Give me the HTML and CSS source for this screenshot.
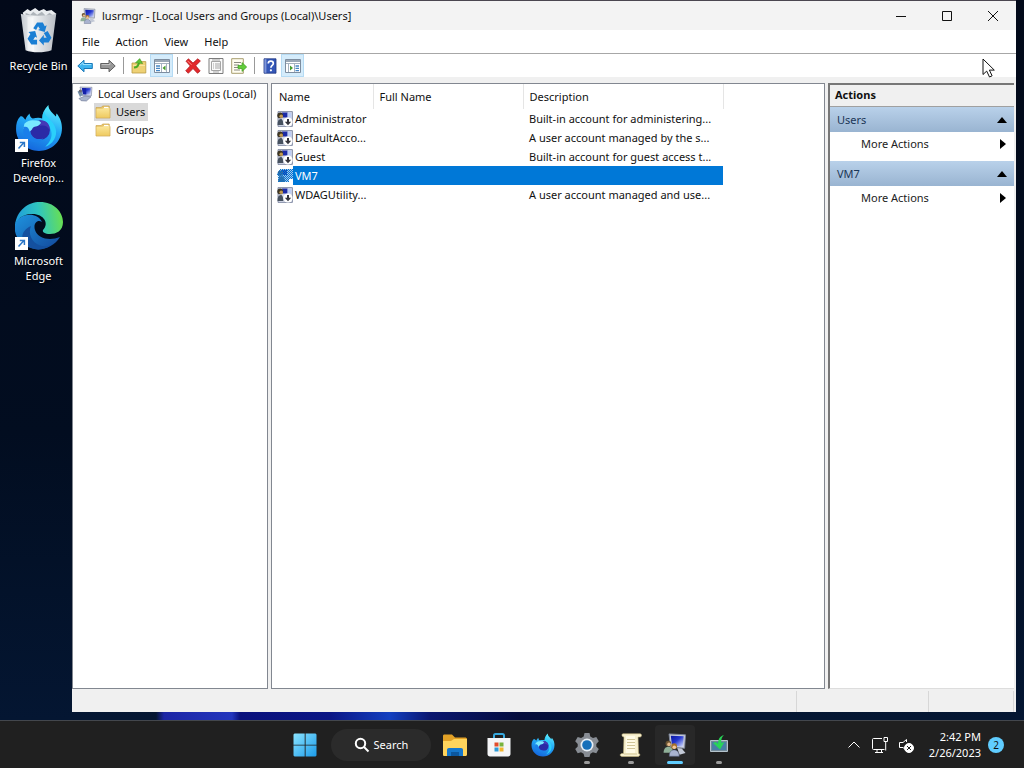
FILE: index.html
```
<!DOCTYPE html>
<html lang="en">
<head>
<meta charset="utf-8">
<meta name="viewport" content="width=device-width, initial-scale=1">
<title>lusrmgr - [Local Users and Groups (Local)\Users]</title>
<link rel="stylesheet" href="styles.css">
</head>
<body>
<svg class="sprite" aria-hidden="true">
  <defs>
    <linearGradient id="g-screen" x1="0" y1="0" x2="1" y2="1"><stop offset="0" stop-color="#0a16a0"/><stop offset=".45" stop-color="#2437cf"/><stop offset="1" stop-color="#dfe8ff"/></linearGradient>
    <linearGradient id="g-folder" x1="0" y1="0" x2="0" y2="1"><stop offset="0" stop-color="#fbe79c"/><stop offset="1" stop-color="#efcb62"/></linearGradient>
    <linearGradient id="g-fox" x1=".7" y1="0" x2=".3" y2="1"><stop offset="0" stop-color="#5df0ff"/><stop offset=".45" stop-color="#22a7f5"/><stop offset="1" stop-color="#1464dc"/></linearGradient>
    <linearGradient id="g-edge-top" x1="0" y1=".5" x2="1" y2=".4"><stop offset="0" stop-color="#1f9bdc"/><stop offset=".5" stop-color="#2fc5c0"/><stop offset="1" stop-color="#6be04d"/></linearGradient>
    <linearGradient id="g-edge-low" x1="0" y1="0" x2="1" y2="1"><stop offset="0" stop-color="#1e93df"/><stop offset="1" stop-color="#12479a"/></linearGradient>
    <linearGradient id="g-win" x1="0" y1="0" x2="1" y2="1"><stop offset="0" stop-color="#8be4ff"/><stop offset="1" stop-color="#1b9bea"/></linearGradient>
    <linearGradient id="g-bin" x1="0" y1="0" x2="1" y2="0"><stop offset="0" stop-color="#c5cad0"/><stop offset=".35" stop-color="#f1f3f5"/><stop offset="1" stop-color="#b9bec5"/></linearGradient>
    <pattern id="p-dither" width="2" height="2" patternUnits="userSpaceOnUse"><path fill="#0078d7" d="M0 0h1v1H0zM1 1h1v1H1z"/></pattern>
  </defs>
  <symbol id="i-mmc" viewBox="0 0 16 16">
    <path fill="#c9cdda" stroke="#7c8498" stroke-width=".6" d="M4 .6 15 1.2l-.6 9L5 9.4z"/>
    <path fill="url(#g-screen)" d="m5.2 1.8 8.6.4-.5 6.9-7.3-.6z"/>
    <path fill="#c3c9d6" d="m9.500 10 3 .300 2.500 3-4 1.200z"/>
    <circle cx="3.600" cy="7" r="1.900" fill="#6b5433"/><circle cx="4" cy="7.600" r="1.200" fill="#e5b98c"/>
    <path fill="#8faf98" d="M.400 13.200c0-2.600 1.300-4 3.300-4s3 1.500 3 4z"/>
    <circle cx="7.400" cy="8.800" r="1.900" fill="#a4702a"/><circle cx="7.500" cy="9.500" r="1.200" fill="#f1c79b"/>
    <path fill="#a9b3cf" stroke="#5c6484" stroke-width=".4" d="M4.200 15.500c0-2.800 1.200-4.200 3.200-4.200s3.400 1.400 3.400 4.200z"/>
  </symbol>
  <symbol id="i-root" viewBox="0 0 16 16">
    <path fill="#ccd0e0" stroke="#7c86a6" stroke-width=".6" d="m3 1 12 .3-.7 8.700-9.300-.6z"/>
    <path fill="url(#g-screen)" d="m5 2 8.800.3-.5 6.500-7.200-.5z"/>
    <path fill="#1420a8" d="m5 2 4 .2.3 6.300-3.200-.2z"/>
    <path fill="#7490aa" d="M.5 5.500 4 4.300l2 4.400-3 2.400z"/>
    <circle cx="3.400" cy="5" r="1.600" fill="#6c6a72"/>
    <path fill="#a9b4cc" stroke="#66718f" stroke-width=".6" d="m2 12.500 6-2.500 6 .800-4.600 4.200-5.200-.3z"/>
  </symbol>
  <symbol id="i-user" viewBox="0 0 16 16">
    <path fill="#d5d9e8" stroke="#6f7894" stroke-width=".8" d="M1 .6h14.400v14.800H1z"/>
    <path fill="#1c2aa5" d="M5 1.600h5.600v5H6z"/><path fill="#bccdf6" d="M10.600 1.600h3.800v5h-3.800z"/>
    <circle cx="3.200" cy="4.400" r="2.900" fill="#3d3524"/><circle cx="4.200" cy="5.200" r="1.800" fill="#c39b50"/>
    <path fill="#46515f" d="M.5 14c0-4 1.100-6 3.200-6 1.600 0 2.600 1.800 2.600 6z"/>
    <circle cx="11" cy="11" r="4.600" fill="#fff"/>
    <path fill="#34343c" d="M10 8h2v2.800h2.200L11 14.200l-3.200-3.400H10z"/>
  </symbol>
  <symbol id="i-user-sel" viewBox="0 0 16 16">
    <path fill="#a9c4e6" d="M5 1h11v13H2V9L0 6l3-4z"/><path fill="#1c3fb0" d="M5 2h5v5H6z"/>
    <circle cx="3.400" cy="5.200" r="2.600" fill="#39608c"/><path fill="#416a93" d="M1 14c0-4 1.300-6 3.400-6S8 10 8 14z"/>
    <path fill="url(#p-dither)" d="M3 1h13v13H1V9L0 6z"/><path fill="#fff" d="M12 11h4v5h-4z"/>
  </symbol>
  <symbol id="i-folder" viewBox="0 0 16 16">
    <path fill="#e8c469" stroke="#c9a24a" stroke-width=".7" d="M1 3.600h5.200L7.600 2h6.600v2.400H15V14H1z"/>
    <path fill="#fff" d="M9 2.900h4.500v1.400H9z"/><path fill="url(#g-folder)" d="M1.500 4.800h6L9 3.900h5.500v9.600h-13z"/>
  </symbol>
  <symbol id="i-back" viewBox="0 0 16 16"><path fill="#3fb3ee" stroke="#1a78b8" d="M.8 8 7 2.200v3.300h8.300v5H7v3.300z" stroke-linejoin="round"/><path stroke="#9ee2ff" d="M3 7.200 6 4.600v1.900h8.300" fill="none"/></symbol>
  <symbol id="i-forward" viewBox="0 0 16 16"><path fill="#979797" stroke="#606060" d="M15.200 8 9 2.200v3.300H.7v5H9v3.300z" stroke-linejoin="round"/><path stroke="#c3c3c3" d="M1.700 6.500H10V4.800" fill="none"/></symbol>
  <symbol id="i-up" viewBox="0 0 16 16"><path fill="#eed175" stroke="#b89a44" stroke-width=".8" d="M1 5h5l2-1.400h6.800V15H1z"/><path fill="#f8e5a0" d="M2 7h12v1H2z"/><path fill="none" stroke="#4bab25" stroke-width="2" d="M3 9.500c3 0 4.500-2 5-5"/><path fill="#5fc436" stroke="#388b1b" stroke-width=".5" d="m4.500 4.800 4.200-4.200 3 5z"/></symbol>
  <symbol id="i-tree" viewBox="0 0 16 16"><path fill="#fff" stroke="#7d8d9f" d="M.5 1.500h15v13H.5z"/><path fill="#9aa8b6" d="M1 2h14v2H1z"/><path stroke="#a5b2c0" d="M1 5.500h14M7.500 6v8M12.500 6v8"/><path stroke="#4686c4" stroke-width="1.300" d="M2 8h4M2 10.300h4M2 12.600h4"/><path fill="#459c2d" d="M11.500 7.500v5l-3-2.500z"/></symbol>
  <symbol id="i-pane" viewBox="0 0 16 16"><path fill="#fff" stroke="#7d8d9f" d="M.5 1.500h15v13H.5z"/><path fill="#9aa8b6" d="M1 2h14v2H1z"/><path stroke="#a5b2c0" d="M1 5.500h14M3.500 6v8M9.500 6v8"/><path stroke="#4686c4" stroke-width="1.300" d="M10.500 8H14m-3.500 2.300H14m-3.500 2.300H14"/><path fill="#459c2d" d="M5 7.500v5L8 10z"/></symbol>
  <symbol id="i-delete" viewBox="0 0 16 16"><path fill="#e3282b" stroke="#a81318" stroke-width=".7" stroke-linejoin="round" d="M1 3.200 3.400.8 8 5 12.700.8 15.400 3 10.700 7.700 15.200 13 12.500 15.300 8 10.600 3.300 15.300.7 12.800 5.200 7.900z"/><path stroke="#ff8b84" d="m2.500 2.800 4 4" fill="none"/></symbol>
  <symbol id="i-props" viewBox="0 0 16 16"><path fill="#fafafa" stroke="#7c7c7c" d="M1 .500h14v15H1z"/><path fill="none" stroke="#a5a5a5" d="M3.500 3.500h9v9h-9zM4 2h8M7 6h5M7 8h5M7 10h5M5 6h1M5 8h1M5 10h1M5 14h6"/></symbol>
  <symbol id="i-export" viewBox="0 0 16 16"><path fill="#fffdf0" stroke="#a89e6e" d="M.7.7h11.600v14.600H.7z"/><path stroke="#8a8a80" d="M3 4.500h7M3 7h5M3 9.500h4M3 12h6"/><path fill="#62cc3b" stroke="#3c9c21" stroke-width=".7" d="M7 7.500h4V4.600L15.700 9 11 13.400v-2.900H7z"/></symbol>
  <symbol id="i-help" viewBox="0 0 16 16"><path fill="#3457b8" stroke="#1d347e" stroke-width=".8" d="M2 .8h12v14.400H2z"/><path fill="#8197d8" d="M2.400 1.200h2v13.600h-2z"/><path fill="none" stroke="#fff" stroke-width="1.700" d="M6.300 5.400c0-3.100 5-3.100 5 0 0 2-2.400 2-2.400 4.300"/><circle cx="8.900" cy="12.300" r="1.100" fill="#fff"/></symbol>
  <symbol id="i-firefox" viewBox="0 0 46 46">
    <path fill="url(#g-fox)" d="M5 12c2-1 3 1 5 3 1-3 3-5 4-6 0 2 1 4 3 5 4-1 7-1 9 0 0-5 2-9 6-13 0 5 4 7 7 11 1-1 0-2 1-3 4 5 5 10 5 14 0 13-10 22-22 22S1 36 1 24c0-5 1-9 4-12z"/>
    <path fill="#2bd0fb" d="M28 7c1 7 9 8 11 17 2 7-3 15-10 17 9-8 7-18 1-22-3-2-5-7-2-12z"/>
    <circle cx="24" cy="25" r="9.500" fill="#2b2aa6"/>
    <path fill="#4539b6" d="M24 16c6-1 10 4 9 9-2-4-5-5-9-4z"/>
    <path fill="#79e8ff" d="M9 19c5-5 9-3 14-3l2 2c-2 4-6 3-8 5-1 2-2 3-4 4-1-3-2-4-5-3z"/>
    <path fill="#1a7fea" d="M8 22c4-1 5 1 6 4 1 6 7 9 13 7-5 6-16 4-19-5z"/>
  </symbol>
  <symbol id="i-shortcut" viewBox="0 0 13 13"><path fill="#fff" d="M0 0h13v13H0z"/><path fill="none" stroke="#2a76c7" stroke-width="1.500" d="m3.500 9.500 5.500-6M4.800 3.400H9.400V8"/></symbol>
</svg>

<main class="desktop">
  <nav class="shortcuts" aria-label="Desktop">
    <a class="shortcut" href="#recycle">
      <svg class="shortcut-art" viewBox="0 0 48 48" aria-hidden="true">
        <path fill="#e9ecef" d="m7 5 5-4 3 2 5-3 4 3 5-2 3 2 5-1 5 4-2 5H9z"/>
        <path fill="#aeb4ba" d="m10 5 5 2 3-3 4 3 5-3 4 4 4-3 4 3H10z"/>
        <path fill="url(#g-bin)" d="M5 6c10 3 27 3 37 0l-5 38c-8 3-20 3-27 0z"/>
        <path fill="#fff" opacity=".5" d="m12 9 6 1 1 35-7-1z"/>
        <path fill="#1b7fd4" d="m18 21 4-6h6l2 4 2-1-2 7-7-2 2-1-2-3-2 4zM33 24l4 7-3 5h-5v3l-5-5 5-6v3h3l-3-5zM13 25l7-1 2 7-2-1-2 3h4v5h-6l-4-6 3-5z"/>
      </svg>
      <span class="shortcut-name">Recycle Bin</span>
    </a>
    <a class="shortcut" href="#firefox">
      <span class="art-wrap"><svg class="shortcut-art" aria-hidden="true"><use href="#i-firefox"/></svg><svg class="link-mark" aria-hidden="true"><use href="#i-shortcut"/></svg></span>
      <span class="shortcut-name">Firefox Develop...</span>
    </a>
    <a class="shortcut" href="#edge">
      <span class="art-wrap"><svg class="shortcut-art" viewBox="0 0 48 48" aria-hidden="true">
        <path fill="url(#g-edge-low)" d="M0 22C4 11 22 9 27 20c-5-3-9 2-7 8 3 9 15 11 25 7-6 10-19 15-29 11C6 43-2 34 0 22z"/>
        <path fill="#14509f" d="M16 24c-5 12 7 24 20 19-8 6-19 6-26-1-5-6-3-14 6-18z"/>
        <path fill="url(#g-edge-top)" d="M0 23C2 8 13 0 25 0c14 0 23 10 23 20 0 9-7 12-13 12-5 0-8-2-7-4 7-7 0-17-12-16C8 12 2 17 0 23z"/>
      </svg><svg class="link-mark" aria-hidden="true"><use href="#i-shortcut"/></svg></span>
      <span class="shortcut-name">Microsoft Edge</span>
    </a>
  </nav>

  <section class="window" aria-label="lusrmgr">
    <header class="titlebar">
      <svg class="icon" aria-hidden="true"><use href="#i-mmc"/></svg>
      <h1 class="title">lusrmgr - [Local Users and Groups (Local)\Users]</h1>
      <button class="caption" aria-label="Minimize"><svg viewBox="0 0 12 12"><path d="M1 6.500h10"/></svg></button>
      <button class="caption" aria-label="Maximize"><svg viewBox="0 0 12 12"><path d="M1.500 1.500h9v9h-9z"/></svg></button>
      <button class="caption" aria-label="Close"><svg viewBox="0 0 12 12"><path d="m1 1 10 10M11 1 1 11"/></svg></button>
    </header>
    <nav class="menubar" aria-label="Menu">
      <button>File</button><button>Action</button><button>View</button><button>Help</button>
    </nav>
    <div class="toolbar" role="toolbar" aria-label="Tools">
      <button aria-label="Back"><svg class="icon"><use href="#i-back"/></svg></button>
      <button aria-label="Forward"><svg class="icon"><use href="#i-forward"/></svg></button>
      <span class="divider"></span>
      <button aria-label="Up one level"><svg class="icon"><use href="#i-up"/></svg></button>
      <button class="pressed" aria-pressed="true" aria-label="Show console tree"><svg class="icon"><use href="#i-tree"/></svg></button>
      <span class="divider"></span>
      <button aria-label="Delete"><svg class="icon"><use href="#i-delete"/></svg></button>
      <button aria-label="Properties"><svg class="icon"><use href="#i-props"/></svg></button>
      <button aria-label="Export list"><svg class="icon"><use href="#i-export"/></svg></button>
      <span class="divider"></span>
      <button aria-label="Help"><svg class="icon"><use href="#i-help"/></svg></button>
      <button class="pressed" aria-pressed="true" aria-label="Show action pane"><svg class="icon"><use href="#i-pane"/></svg></button>
    </div>

    <div class="panes">
      <div class="pane tree">
        <button class="node"><svg class="icon" aria-hidden="true"><use href="#i-root"/></svg><span>Local Users and Groups (Local)</span></button>
        <div class="branch">
          <button class="node selected"><svg class="icon" aria-hidden="true"><use href="#i-folder"/></svg><span>Users</span></button>
          <button class="node"><svg class="icon" aria-hidden="true"><use href="#i-folder"/></svg><span>Groups</span></button>
        </div>
      </div>

      <div class="pane list">
        <table class="users">
          <thead><tr><th class="col-name">Name</th><th class="col-full">Full Name</th><th class="col-desc">Description</th></tr></thead>
          <tbody>
            <tr><td><div class="user"><svg class="icon" aria-hidden="true"><use href="#i-user"/></svg><span>Administrator</span></div></td><td></td><td>Built-in account for administering...</td></tr>
            <tr><td><div class="user"><svg class="icon" aria-hidden="true"><use href="#i-user"/></svg><span>DefaultAcco...</span></div></td><td></td><td>A user account managed by the s...</td></tr>
            <tr><td><div class="user"><svg class="icon" aria-hidden="true"><use href="#i-user"/></svg><span>Guest</span></div></td><td></td><td>Built-in account for guest access t...</td></tr>
            <tr class="current"><td><div class="user"><svg class="icon" aria-hidden="true"><use href="#i-user-sel"/></svg><span>VM7</span></div></td><td></td><td></td></tr>
            <tr><td><div class="user"><svg class="icon" aria-hidden="true"><use href="#i-user"/></svg><span>WDAGUtility...</span></div></td><td></td><td>A user account managed and use...</td></tr>
          </tbody>
        </table>
      </div>

      <aside class="actions">
        <h2 class="actions-title">Actions</h2>
        <button class="group"><span>Users</span><svg viewBox="0 0 10 6" aria-hidden="true"><path d="M0 6 5 0l5 6z"/></svg></button>
        <button class="more"><span>More Actions</span><svg viewBox="0 0 6 10" aria-hidden="true"><path d="m0 0 6 5-6 5z"/></svg></button>
        <button class="group"><span>VM7</span><svg viewBox="0 0 10 6" aria-hidden="true"><path d="M0 6 5 0l5 6z"/></svg></button>
        <button class="more"><span>More Actions</span><svg viewBox="0 0 6 10" aria-hidden="true"><path d="m0 0 6 5-6 5z"/></svg></button>
      </aside>
    </div>
    <footer class="status"><span class="cell wide"></span><span class="cell mid"></span><span class="cell end"></span></footer>
  </section>
  <svg class="pointer" viewBox="0 0 13 20" aria-hidden="true"><path fill="#fff" stroke="#111" d="M1 1v15.500l3.700-3.400L7.500 19l2.600-1.200-2.700-5.700h4.900z"/></svg>
</main>

<footer class="taskbar">
  <div class="apps">
    <button class="app" aria-label="Start"><svg class="app-art" viewBox="0 0 24 24"><path fill="url(#g-win)" d="M1.500.500h10.200v11.200H.500V1.500zM12.600.500h9.900l1 1v10.200H12.600zM.500 12.600h11.200v10.900H1.500l-1-1zM12.600 12.600h10.900v9.900l-1 1h-9.900z"/></svg></button>
    <button class="search"><svg viewBox="0 0 16 16" aria-hidden="true"><circle cx="6.500" cy="6.500" r="4.700"/><path d="m10 10 4.500 4.500"/></svg><span>Search</span></button>
    <button class="app" aria-label="File Explorer"><svg class="app-art" viewBox="0 0 24 24"><path fill="#e2a126" d="M0 3c0-1 .5-1.500 1.500-1.500H9l3 3h10c1 0 2 .5 2 1.500v8H0z"/><path fill="#ffd45c" d="M0 8h8l3-2h13v15.500c0 .8-.5 1.500-1.500 1.500h-21C.5 23 0 22.500 0 21.500z"/><path fill="#1577cc" d="M4 23v-6c0-1.200.7-2 2-2h12c1.300 0 2 .8 2 2v6z"/><path fill="#0c579e" d="M8 19h8v4H8z"/></svg></button>
    <button class="app" aria-label="Microsoft Store"><svg class="app-art" viewBox="0 0 24 24"><path fill="none" stroke="#38a9de" stroke-width="2" d="M7 6V2.500C7 1.500 7.500 1 8.500 1h7c1 0 1.500.5 1.500 1.500V6"/><path fill="#f4f5f7" d="M.5 5h23v16c0 1.500-1 2.500-2.500 2.500H3C1.500 23.500.5 22.500.5 21z"/><path fill="#e24c2b" d="M7.500 9.500h4v4h-4z"/><path fill="#78b33c" d="M12.500 9.500h4v4h-4z"/><path fill="#2d9ad7" d="M7.500 14.500h4v4h-4z"/><path fill="#f3b52e" d="M12.500 14.500h4v4h-4z"/></svg></button>
    <button class="app" aria-label="Firefox"><svg class="app-art"><use href="#i-firefox"/></svg></button>
    <button class="app open" aria-label="Settings"><svg class="app-art" viewBox="0 0 24 24"><path fill="#888d94" d="M9.500 0h5l.8 3.400 2.700 1.500 3.300-1 2.500 4.300L21.300 11v2.500l2.500 2.600-2.500 4.200-3.400-1-2.500 1.400-.9 3.300h-5l-.9-3.300L6 19.300l-3.300 1-2.500-4.200 2.500-2.600V11L.2 8.200l2.500-4.300 3.400 1 2.600-1.500z"/><circle cx="12" cy="12" r="6.500" fill="#e8eff5"/><circle cx="12" cy="12" r="4.800" fill="#1670ba"/></svg></button>
    <button class="app open" aria-label="Script"><svg class="app-art" viewBox="0 0 24 24"><path fill="#f8f1cf" stroke="#c5b67e" stroke-width=".6" d="M4 .8h17c2 0 2 3.200 0 3.200h-2l.5 16.500c2 0 1.700 3-.5 3H3c-2.300 0-2.300-3 0-3h1.500L5 4C2.500 4 2.500.8 4 .8z"/><path fill="#fffbe6" d="M7 3h9v17H7z"/><path stroke="#d0c597" d="M8 6.500h8M8 9.500h8M8 12.500h8M8 15.500h8M5 21h13"/></svg></button>
    <button class="app open active" aria-label="Local Users and Groups"><svg class="app-art"><use href="#i-mmc"/></svg></button>
    <button class="app open" aria-label="Remote"><svg class="app-art" viewBox="0 0 24 24"><path fill="#718999" stroke="#b4c3cc" d="M3.500 7.500h17v11h-17z"/><path fill="#477fa5" d="M5 9h14v8H5z"/><path fill="#28d558" d="m6 10 3-1 2 2c0-5 2-8 6-9-3 3-3 6-2.500 8l3-1-4.500 7.500z"/></svg></button>
  </div>
  <div class="tray">
    <button class="tray-button" aria-label="Hidden icons"><svg viewBox="0 0 16 16"><path d="m2.500 10.500 5.500-5.500 5.500 5.500"/></svg></button>
    <button class="tray-button" aria-label="Network"><svg viewBox="0 0 16 16"><path d="M10 1.500H1.500c-.6 0-1 .4-1 1v9c0 .6.4 1 1 1h11M5 13v2.500M3 15.500h8M9.500 13v2.500M12 .5h3.500v4H12zM13.700 4.500v9"/></svg></button>
    <button class="tray-button" aria-label="Volume muted"><svg viewBox="0 0 16 16"><path d="M8.500 5V2.500L5 5.500H1.500v5H5l1.500 1.400"/><circle cx="11" cy="11" r="4.500" fill="#fff"/><path class="cross" d="m9 9 4 4m0-4-4 4"/></svg></button>
    <button class="clock"><span>2:42 PM</span><span>2/26/2023</span></button>
    <button class="badge" aria-label="2 notifications">2</button>
  </div>
</footer>
</body>
</html>
```
FILE: styles.css
```
* { box-sizing: border-box; }

body {
  margin: 0;
  min-height: 100vh;
  display: flex;
  flex-direction: column;
  font: 11px/18px "Noto Sans", "Open Sans", sans-serif;
  color: #111;
  background: #03101f;
}

button {
  margin: 0;
  padding: 0;
  border: 0;
  background: none;
  font: inherit;
  color: inherit;
  text-align: left;
}

h1, h2 { margin: 0; font: inherit; }
svg { display: block; flex: none; }
.sprite { position: absolute; width: 0; height: 0; }
.icon { width: 16px; height: 16px; }

/* Desktop */
.desktop {
  position: relative;
  flex: 1;
  display: flex;
  padding: 0 8px 8px 0;
  background:
    linear-gradient(90deg, transparent 156px, #1c25a5 164px, #2336bd 232px, #0a117c 240px, #0b1685 330px, #123fc0 390px, #0a1670 430px, #050d3c 520px, transparent 640px) bottom / 100% 8px no-repeat,
    linear-gradient(#020919, #020d20 60%, #041632);
}

.shortcuts {
  width: 72px;
  flex: none;
  display: flex;
  flex-direction: column;
  gap: 17px;
  padding: 7px 0 0 5px;
}

.shortcut {
  display: flex;
  flex-direction: column;
  align-items: center;
  gap: 3px;
  color: #fff;
  text-align: center;
  text-decoration: none;
  line-height: 15px;
  text-shadow: 0 1px 2px #000;
}

.shortcut:first-child { margin-bottom: 14px; white-space: nowrap; }
.shortcut:first-child .shortcut-art { width: 46px; }
.shortcut-art { width: 48px; height: 48px; }
.art-wrap { position: relative; }
.link-mark { position: absolute; left: 0; bottom: 0; width: 13px; height: 13px; }
.shortcut-name { max-width: 66px; }

/* Window */
.window {
  flex: 1;
  min-width: 0;
  display: flex;
  flex-direction: column;
  border-top: 1px solid #4b4650;
  background: #f0f0f0;
}

.titlebar {
  display: flex;
  align-items: center;
  height: 29px;
  padding-left: 8px;
  background: #f3f3f3;
}

.title { flex: 1; padding-left: 6px; }
.caption { width: 46px; height: 29px; display: grid; place-items: center; }
.caption svg { width: 12px; height: 12px; fill: none; stroke: #111; }

.menubar {
  display: flex;
  gap: 16px;
  height: 24px;
  padding: 0 10px;
  background: #fff;
  border-bottom: 1px solid #a7a7a7;
}

.toolbar {
  display: flex;
  align-items: center;
  height: 23px;
  padding-left: 1px;
  background: #fff;
}

.toolbar button { width: 23px; height: 23px; display: grid; place-items: center; }
.toolbar .pressed { background: #d5ecfb; border: 1px solid #b5dbf4; }
.divider { width: 8px; height: 17px; background: linear-gradient(#999, #999) center / 1px 100% no-repeat; }

.panes {
  flex: 1;
  display: grid;
  grid-template-columns: minmax(160px, 196fr) minmax(0, 554fr) minmax(140px, 186fr);
  gap: 3px;
  padding: 6px 2px 0 0;
}

.pane { background: #fff; border: 1px solid #828790; min-width: 0; }

/* Console tree */
.tree { padding: 1px 0 0 4px; }
.tree .node { display: flex; align-items: center; gap: 5px; height: 18px; white-space: nowrap; }
.branch { display: flex; flex-direction: column; align-items: flex-start; padding-left: 17px; }
.branch .node { padding: 0 3px 0 1px; }
.node.selected { background: #d9d9d9; }

/* User list */
.users { width: 451px; table-layout: fixed; border-collapse: collapse; }
.users th {
  height: 25px;
  padding: 0 6px;
  text-align: left;
  font-weight: 400;
  border-right: 1px solid #e5e5e5;
}
.users th:first-child { padding-left: 7px; }
.users td { height: 19px; padding: 0 6px; white-space: nowrap; }
.users td:first-child { padding: 0 0 0 5px; }
.col-name { width: 101px; }
.col-full { width: 150px; }
.col-desc { width: 200px; }
.user { display: flex; align-items: center; }
.user span { flex: 1; padding-left: 2px; line-height: 19px; }
.current td { background: #0078d7; color: #fff; }
.current td:first-child { background: none; }
.current .user span { background: #0078d7; }

/* Actions */
.actions {
  display: flex;
  flex-direction: column;
  background: #fff;
  border-top: 2px solid #777;
  border-left: 2px solid #777;
  border-bottom: 1px solid #ddd;
}
.actions-title {
  height: 22px;
  padding: 1px 5px;
  font-weight: 700;
  background: #f0f0f0;
  border-bottom: 1px solid #a0a0a0;
}
.actions button { display: flex; align-items: center; justify-content: space-between; }
.group { height: 25px; padding: 0 7px; color: #1c3656; background: linear-gradient(#b9d1ea, #99b4d1); }
.group svg { width: 10px; height: 6px; fill: #000; }
.more { height: 24px; margin-bottom: 5px; padding: 0 8px 0 31px; color: #222; }
.more svg { width: 6px; height: 10px; }

.status { display: flex; justify-content: flex-end; height: 23px; padding: 2px 2px 0 0; }
.cell { border-right: 1px solid #d7d7d7; }
.wide { flex: 1; }
.mid { width: 132px; }
.end { width: 85px; }

.pointer { position: absolute; right: 29px; top: 58px; width: 13px; height: 20px; }

/* Taskbar */
.taskbar {
  display: grid;
  grid-template-columns: 1fr auto 1fr;
  height: 48px;
  color: #fff;
  background: #202020;
  border-top: 1px solid #43474d;
}
.apps { grid-column: 2; display: flex; align-items: center; }
.app { position: relative; width: 44px; height: 44px; display: grid; place-items: center; }
.app-art { width: 24px; height: 24px; }
.active::before { content: ""; position: absolute; inset: 2px; border-radius: 4px; background: #282828; }
.active .app-art { position: relative; }
.open::after { content: ""; position: absolute; left: 19px; bottom: 3px; width: 6px; height: 3px; border-radius: 2px; background: #9b9b9b; }
.active::after { left: 14px; width: 16px; background: #60cdff; }
.search {
  display: flex;
  align-items: center;
  justify-content: center;
  gap: 4px;
  width: 100px;
  height: 32px;
  margin: 0 2px 0 4px;
  border-radius: 16px;
  background: #2b2b2b;
}
.search svg { width: 16px; height: 16px; fill: none; stroke: #fff; stroke-width: 2; }

.tray { grid-column: 3; display: flex; align-items: center; justify-content: flex-end; padding-right: 20px; }
.tray-button { width: 26px; height: 32px; display: grid; place-items: center; }
.tray-button svg { width: 16px; height: 16px; fill: none; stroke: #fff; stroke-width: 1; }
.tray-button .cross { stroke: #202020; }
.clock { display: flex; flex-direction: column; align-items: flex-end; margin: 0 7px 0 10px; line-height: 16px; }
.badge { width: 16px; height: 16px; border-radius: 8px; background: #60cdff; color: #111; font-size: 10px; line-height: 16px; text-align: center; }
```
